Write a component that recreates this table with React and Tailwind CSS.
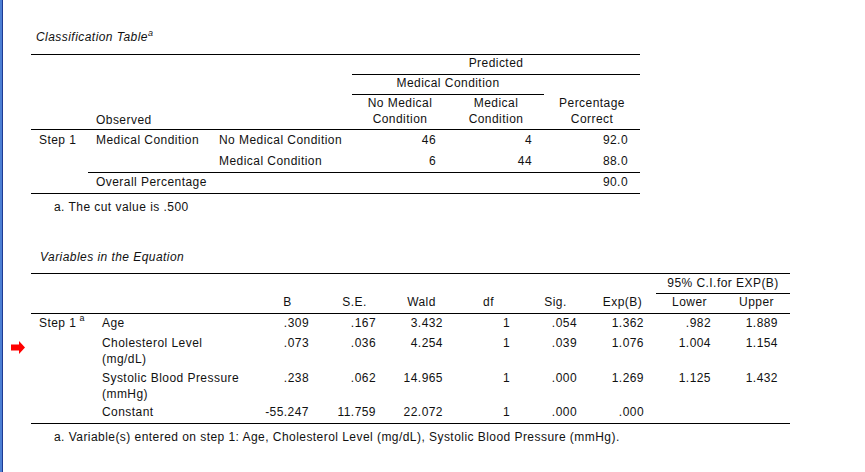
import React from "react";

const font = { fontFamily: '"Liberation Sans", Arial, sans-serif' };

const varRows = [
  { name: ["Age"], b: ".309", se: ".167", wald: "3.432", df: "1", sig: ".054", exp: "1.362", lo: ".982", up: "1.889", pb: "pb-[3px]" },
  { name: ["Cholesterol Level", "(mg/dL)"], b: ".073", se: ".036", wald: "4.254", df: "1", sig: ".039", exp: "1.076", lo: "1.004", up: "1.154", pb: "pb-[2px]" },
  { name: ["Systolic Blood Pressure", "(mmHg)"], b: ".238", se: ".062", wald: "14.965", df: "1", sig: ".000", exp: "1.269", lo: "1.125", up: "1.432", pb: "pb-[2px]" },
];

function RedArrow() {
  return (
    <svg width="14" height="13" viewBox="0 0 14 13" className="absolute left-[11px] top-[341px]">
      <path d="M0 3.5 H8 V0 L14 6.5 L8 13 V9.5 H0 Z" fill="#ff0000" />
    </svg>
  );
}

function ClassificationTable() {
  const th = "font-normal leading-[16px] px-2";
  const num = "text-right pr-3 leading-[16px]";
  return (
    <div>
      <div className="italic leading-[16px] pl-[5px]">
        Classification Table<sup className="text-[9px] -top-[5px]">a</sup>
      </div>
      <table className="mt-[9px] border-t border-black border-separate border-spacing-0 w-[609px] table-fixed">
        <colgroup>
          <col className="w-[57px]" />
          <col className="w-[123px]" />
          <col className="w-[141px]" />
          <col className="w-[96px]" />
          <col className="w-[96px]" />
          <col className="w-[96px]" />
        </colgroup>
        <thead>
          <tr>
            <th rowSpan={3} className={`${th} border-b border-black`}></th>
            <th rowSpan={3} colSpan={2} className={`${th} text-left align-bottom pb-[1px] border-b border-black`}>
              Observed
            </th>
            <th colSpan={3} className={`${th} text-center pb-[3px] border-b border-black`}>
              Predicted
            </th>
          </tr>
          <tr>
            <th colSpan={2} className={`${th} text-center pb-[3px] border-b border-black`}>
              Medical Condition
            </th>
            <th rowSpan={2} className={`${th} text-center align-bottom pb-[2px] border-b border-black`}>
              Percentage
              <br />
              Correct
            </th>
          </tr>
          <tr>
            <th className={`${th} text-center pb-[2px] border-b border-black`}>
              No Medical
              <br />
              Condition
            </th>
            <th className={`${th} text-center pb-[2px] border-b border-black`}>
              Medical
              <br />
              Condition
            </th>
          </tr>
        </thead>
        <tbody>
          <tr>
            <td rowSpan={3} className="align-top pl-2 pt-[2px] leading-[16px] border-b border-black">Step 1</td>
            <td rowSpan={2} className="align-top pl-2 pt-[2px] leading-[16px] border-b border-black">Medical Condition</td>
            <td className="pl-2 pt-[2px] pb-[3px] leading-[16px] whitespace-nowrap">No Medical Condition</td>
            <td className={`${num} pt-[2px] pb-[3px]`}>46</td>
            <td className={`${num} pt-[2px] pb-[3px]`}>4</td>
            <td className={`${num} pt-[2px] pb-[3px]`}>92.0</td>
          </tr>
          <tr>
            <td className="pl-2 pt-[2px] pb-[3px] leading-[16px] border-b border-black">Medical Condition</td>
            <td className={`${num} pt-[2px] pb-[3px] border-b border-black`}>6</td>
            <td className={`${num} pt-[2px] pb-[3px] border-b border-black`}>44</td>
            <td className={`${num} pt-[2px] pb-[3px] border-b border-black`}>88.0</td>
          </tr>
          <tr>
            <td colSpan={2} className="pl-2 pt-[1px] pb-[3px] leading-[16px] border-b border-black">Overall Percentage</td>
            <td className="border-b border-black"></td>
            <td className="border-b border-black"></td>
            <td className={`${num} pt-[1px] pb-[3px] border-b border-black`}>90.0</td>
          </tr>
        </tbody>
      </table>
      <div className="mt-[5px] pl-[23px] leading-[16px]">a. The cut value is .500</div>
    </div>
  );
}

function VariablesTable() {
  const hb = "font-normal leading-[16px] text-center align-bottom pb-[3px] border-b border-black";
  const num = "text-right pr-3 leading-[16px] align-top";
  return (
    <div className="mt-[34px]">
      <div className="italic leading-[16px] pl-[9px]">Variables in the Equation</div>
      <table className="mt-[8px] border-t border-black border-separate border-spacing-0 w-[759px] table-fixed">
        <colgroup>
          <col className="w-[64px]" />
          <col className="w-[159px]" />
          <col className="w-[67px]" />
          <col className="w-[67px]" />
          <col className="w-[67px]" />
          <col className="w-[67px]" />
          <col className="w-[67px]" />
          <col className="w-[67px]" />
          <col className="w-[67px]" />
          <col className="w-[67px]" />
        </colgroup>
        <thead>
          <tr>
            <th rowSpan={2} className={hb}></th>
            <th rowSpan={2} className={hb}></th>
            <th rowSpan={2} className={hb}>B</th>
            <th rowSpan={2} className={hb}>S.E.</th>
            <th rowSpan={2} className={hb}>Wald</th>
            <th rowSpan={2} className={hb}>df</th>
            <th rowSpan={2} className={hb}>Sig.</th>
            <th rowSpan={2} className={hb}>Exp(B)</th>
            <th colSpan={2} className="font-normal leading-[16px] text-center pt-[1px] pb-[2px] border-b border-black whitespace-nowrap">
              95% C.I.for EXP(B)
            </th>
          </tr>
          <tr>
            <th className={hb}>Lower</th>
            <th className={hb}>Upper</th>
          </tr>
        </thead>
        <tbody>
          {varRows.map((r, i) => (
            <tr key={r.b}>
              {i === 0 && (
                <td rowSpan={4} className="align-top pl-2 pt-[1px] leading-[16px] border-b border-black whitespace-nowrap">
                  Step 1<sup className="text-[9px] -top-[6px] ml-[3px]">a</sup>
                </td>
              )}
              <td className={`align-top pl-[7px] pt-[1px] ${r.pb} leading-[16px] whitespace-nowrap`}>
                {r.name.map((n) => (
                  <div key={n}>{n}</div>
                ))}
              </td>
              {[r.b, r.se, r.wald, r.df, r.sig, r.exp, r.lo, r.up].map((v, j) => (
                <td key={j} className={`${num} pt-[1px] ${r.pb}`}>{v}</td>
              ))}
            </tr>
          ))}
          <tr>
            <td className="align-top pl-[7px] pb-[3px] leading-[16px] border-b border-black">Constant</td>
            {["-55.247", "11.759", "22.072", "1", ".000", ".000", "", ""].map((v, j) => (
              <td key={j} className={`${num} pb-[3px] border-b border-black`}>{v}</td>
            ))}
          </tr>
        </tbody>
      </table>
      <div className="mt-[5px] pl-[23px] leading-[16px] whitespace-nowrap">
        a. Variable(s) entered on step 1: Age, Cholesterol Level (mg/dL), Systolic Blood Pressure (mmHg).
      </div>
    </div>
  );
}

export default function App() {
  return (
    <div className="relative flex h-[472px] w-full bg-white text-[12px] tracking-[0.45px] text-[#111]" style={font}>
      <div className="w-[2px] bg-[#4d7fd4]" />
      <div className="w-[1px] bg-[#1d3a94]" />
      <div className="pl-[28px] pt-[29px]">
        <ClassificationTable />
        <VariablesTable />
      </div>
      <RedArrow />
    </div>
  );
}
